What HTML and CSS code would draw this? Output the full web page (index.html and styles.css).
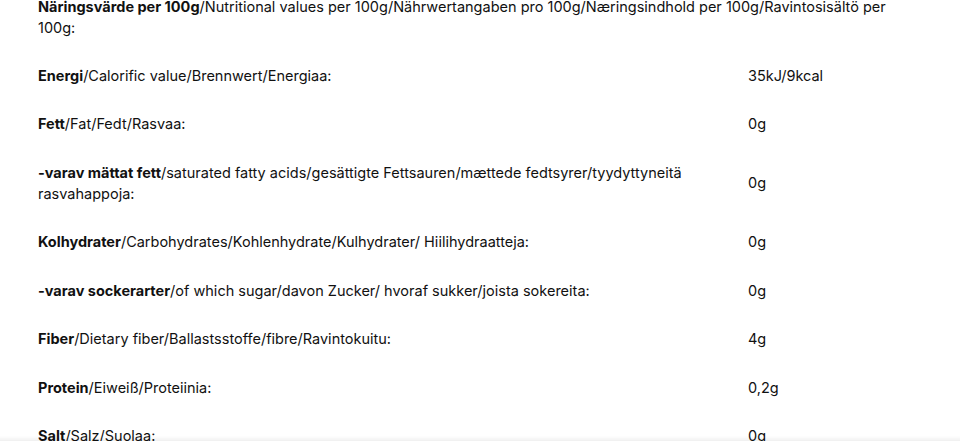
FILE: index.html
```html
<!DOCTYPE html>
<html lang="sv">
<head>
  <meta charset="UTF-8" />
  <meta name="viewport" content="width=device-width, initial-scale=1.0" />
  <title>Näringsvärde</title>
  <link rel="stylesheet" href="styles.css">
</head>
<body>
  <div class="facts">
    <p class="facts-title"><b>Näringsvärde per 100g</b>/Nutritional values per 100g/Nährwertangaben pro 100g/Næringsindhold per 100g/Ravintosisältö per 100g:</p>

    <div class="row">
      <div class="label"><b>Energi</b>/Calorific value/Brennwert/Energiaa:</div>
      <div class="value">35kJ/9kcal</div>
    </div>
    <div class="row">
      <div class="label"><b>Fett</b>/Fat/Fedt/Rasvaa:</div>
      <div class="value">0g</div>
    </div>
    <div class="row">
      <div class="label"><b>-varav mättat fett</b>/saturated fatty acids/gesättigte Fettsauren/mættede fedtsyrer/tyydyttyneitä rasvahappoja:</div>
      <div class="value">0g</div>
    </div>
    <div class="row">
      <div class="label"><b>Kolhydrater</b>/Carbohydrates/Kohlenhydrate/Kulhydrater/ Hiilihydraatteja:</div>
      <div class="value">0g</div>
    </div>
    <div class="row">
      <div class="label"><b>-varav sockerarter</b>/of which sugar/davon Zucker/ hvoraf sukker/joista sokereita:</div>
      <div class="value">0g</div>
    </div>
    <div class="row">
      <div class="label"><b>Fiber</b>/Dietary fiber/Ballastsstoffe/fibre/Ravintokuitu:</div>
      <div class="value">4g</div>
    </div>
    <div class="row">
      <div class="label"><b>Protein</b>/Eiweiß/Proteiinia:</div>
      <div class="value">0,2g</div>
    </div>
    <div class="row">
      <div class="label"><b>Salt</b>/Salz/Suolaa:</div>
      <div class="value">0g</div>
    </div>
  </div>

  <div class="shade"></div>
</body>
</html>
```

FILE: styles.css
```css
* { margin: 0; padding: 0; box-sizing: border-box; }
body {
  font-family: 'Inter', 'Noto Sans', sans-serif;
  font-size: 14.5px;
  line-height: 21px;
  color: #111;
  background: #fff;
  overflow: hidden;
}
.facts {
  width: 908px;
  padding-left: 38px;
  margin-top: -18px;
}
.facts b { font-weight: 700; }
.facts-title { padding: 14px 0 13px; }
.row {
  display: grid;
  grid-template-columns: 700px 1fr;
  column-gap: 10px;
  align-items: center;
  padding: 13.5px 0 14px;
}
.value { white-space: nowrap; }
.shade {
  position: fixed;
  left: 0; right: 0; bottom: 0;
  height: 5px;
  background: linear-gradient(to bottom, rgba(0,0,0,0), rgba(0,0,0,0.06));
}
```
